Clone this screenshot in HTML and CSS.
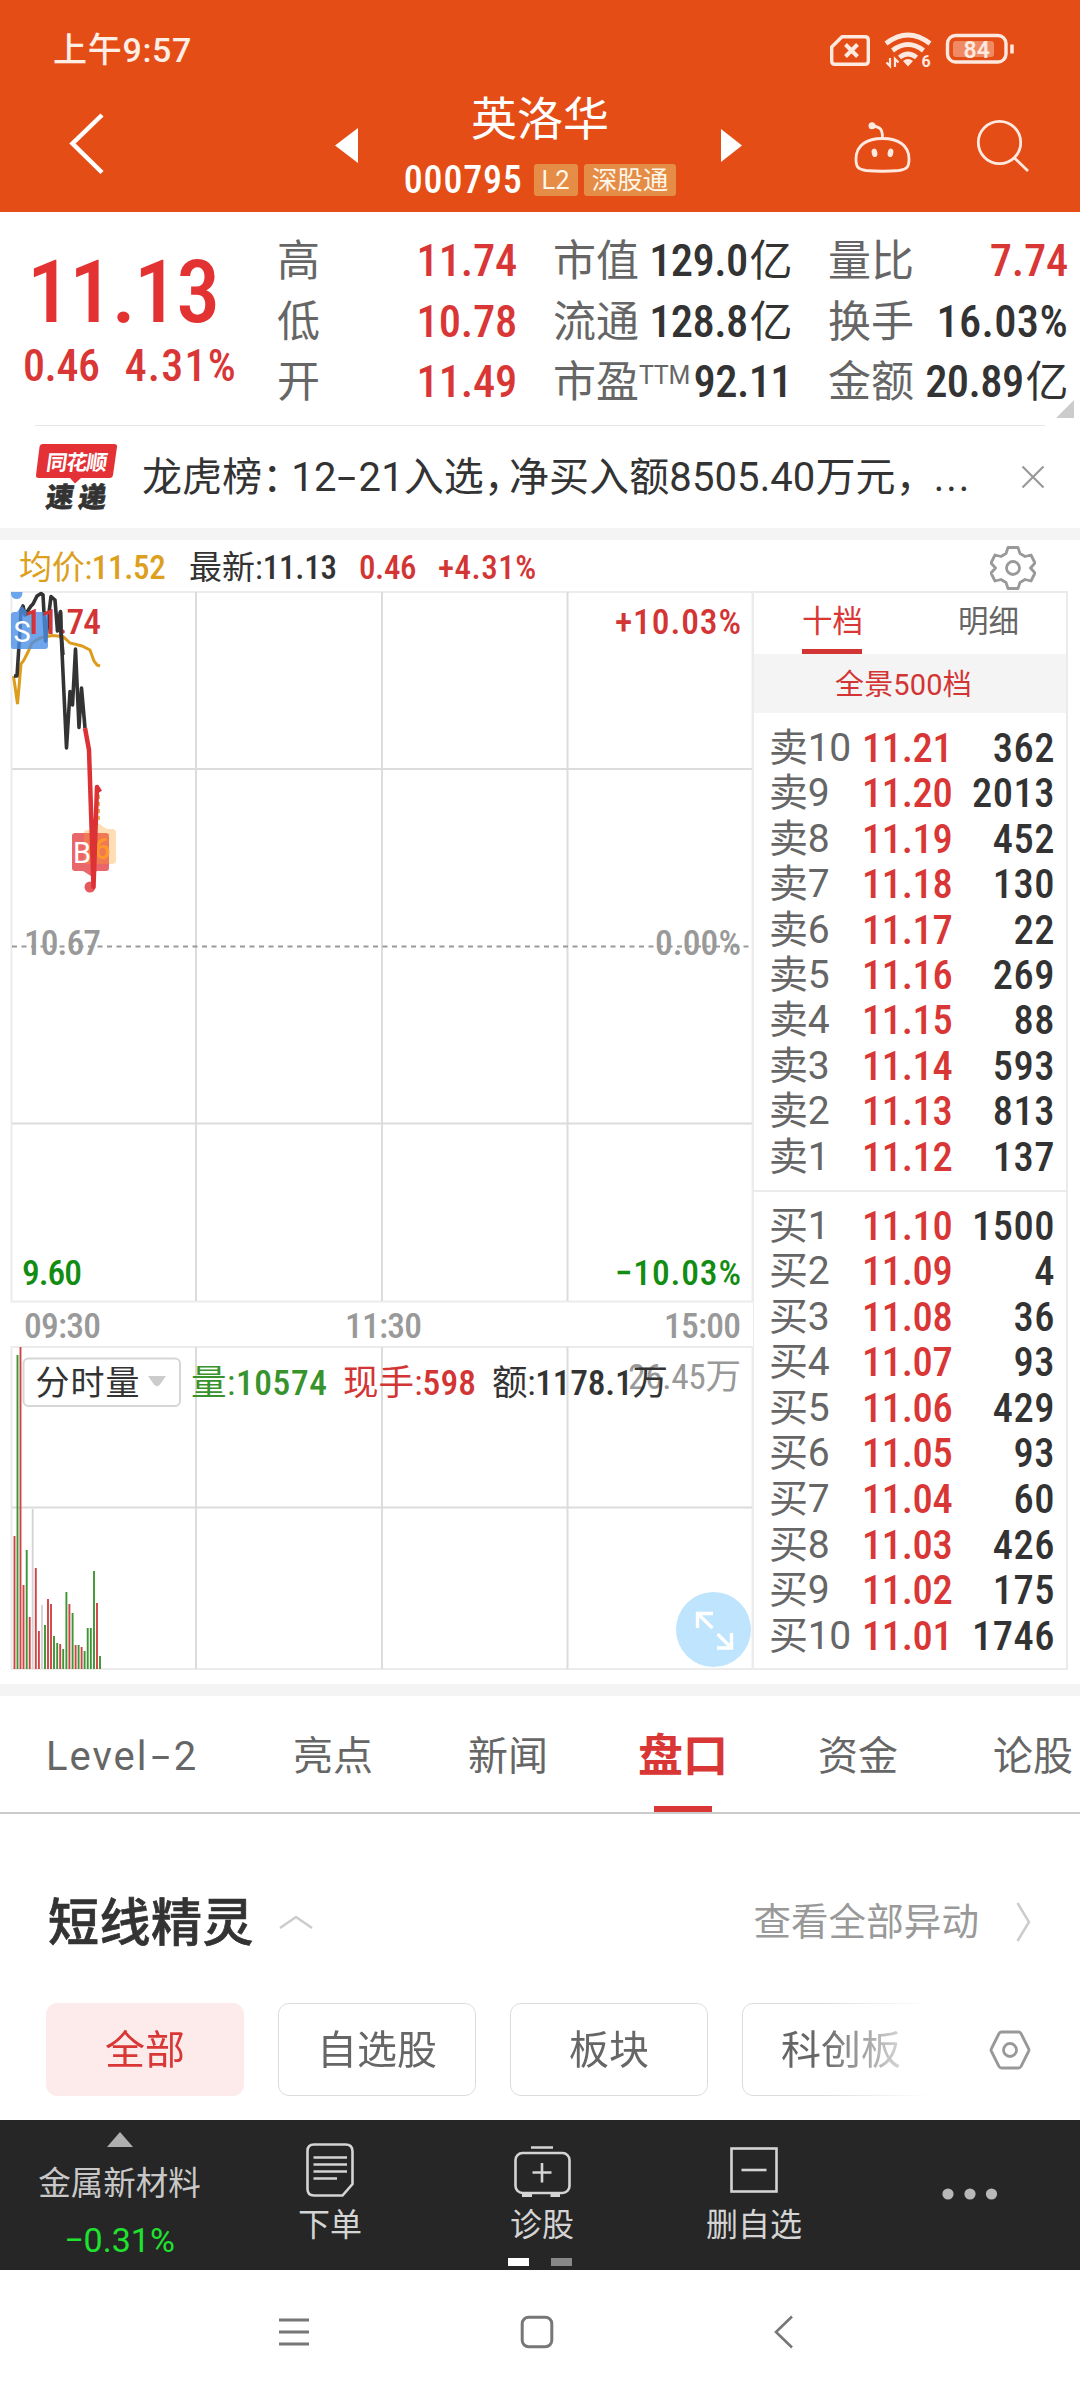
FILE: index.html
```html
<!DOCTYPE html>
<html lang="zh-CN">
<head>
<meta charset="utf-8">
<title>英洛华 000795</title>
<link rel="stylesheet" href="styles.css">
</head>
<body>
<header class="top">
  <div class="status">
    <span class="clock">上午9:57</span>
    <svg class="status-icons" width="190" height="40" viewBox="828 30 190 40" fill="none" stroke="#fde9df" stroke-width="3.4">
      <path d="M842 36.700H865Q868.300 36.700 868.300 40V61Q868.300 64.300 865 64.300H835Q831.700 64.300 831.700 61V47Z" stroke-linejoin="round"/>
      <path d="M845.500 44.500L857.500 56.500M857.500 44.500L845.500 56.500" stroke-width="4"/>
      <path d="M886 43.500Q908 26.500 930 43.500" stroke-width="4.800"/>
      <path d="M892.500 50.500Q908 38.500 923.500 50.500" stroke-width="4.800"/>
      <path d="M899.500 57.500Q908 50.500 916.500 57.500" stroke-width="4.800"/>
      <path d="M908 66.500L903 61Q908 57 913 61Z" fill="#fde9df" stroke="none"/>
      <path d="M890 58V66L886.500 62.500M895 67V59L898.500 62.500" stroke-width="2.200"/>
      <text class="wifi-gen" x="921.500" y="67">6</text>
      <rect x="947.500" y="35.500" width="58.500" height="26.500" rx="8"/>
      <rect x="953" y="41" width="41" height="16" rx="3" fill="#f08a64" stroke="none"/>
      <path d="M1012 44.500V53.500" stroke-width="3.500"/>
      <text class="battery" x="963.500" y="58">84</text>
    </svg>
  </div>
  <div class="titlebar">
    <svg class="back" width="40" height="66" viewBox="68 111 40 66"><path d="M102 115L72.500 143.500L102 172.500" fill="none" stroke="#fff" stroke-width="4.500"/></svg>
    <svg class="prev" width="24" height="35" viewBox="0 0 24 35"><path d="M23 0V35L0 17.500Z" fill="#fff"/></svg>
    <div class="stock">
      <div class="name">英洛华</div>
      <div class="code"><span class="digits">000795</span><span class="badge">L2</span><span class="badge">深股通</span></div>
    </div>
    <svg class="next" width="22" height="33" viewBox="0 0 22 33"><path d="M0 0V33L21 16.500Z" fill="#fff"/></svg>
    <svg class="robot" width="62" height="56" viewBox="852 119 62 56" fill="none" stroke="#ffe9e0" stroke-width="2.800">
      <path d="M866 170.500C857 169 856 166 856 159C856 145 867 138.500 882.500 138.500S909 145 909 159C909 166 908 169 899 170.500Q882.500 172 866 170.500Z"/>
      <path d="M882.500 138C882.500 130 881 127 873 126"/>
      <circle cx="872" cy="125.800" r="3.500" fill="#ffe9e0" stroke="none"/>
      <ellipse cx="874.500" cy="152.800" rx="2.800" ry="4.200" fill="#ffe9e0" stroke="none" transform="rotate(-12 874.500 152.800)"/>
      <ellipse cx="890.500" cy="152.800" rx="2.800" ry="4.200" fill="#ffe9e0" stroke="none" transform="rotate(12 890.500 152.800)"/>
    </svg>
    <svg class="search" width="54" height="54" viewBox="976 119 54 54" fill="none" stroke="#ffe9e0" stroke-width="2.800"><circle cx="999.500" cy="142.500" r="21.200"/><path d="M1014 157.500L1028 171"/></svg>
  </div>
</header>

<section class="quote">
  <div class="price"><div class="last">11.13</div><div class="change"><span>0.46</span><span class="ratio">4.31%</span></div></div>
  <div class="col ohl">
    <div><label>高</label><b class="up">11.74</b></div>
    <div><label>低</label><b class="up">10.78</b></div>
    <div><label>开</label><b class="up">11.49</b></div>
  </div>
  <div class="col cap">
    <div><label>市值</label><b>129.0<i>亿</i></b></div>
    <div><label>流通</label><b>128.8<i>亿</i></b></div>
    <div><label>市盈<sup>TTM</sup></label><b>92.11</b></div>
  </div>
  <div class="col vol">
    <div><label>量比</label><b class="up">7.74</b></div>
    <div><label>换手</label><b class="wide">16.03%</b></div>
    <div><label>金额</label><b>20.89<i>亿</i></b></div>
  </div>
  <svg class="corner" width="18" height="18" viewBox="0 0 18 18"><path d="M18 0V18H0Z" fill="#ccc"/></svg>
</section>

<section class="news">
  <svg class="brand" width="84" height="80" viewBox="35 436 84 80">
    <path d="M43 443H114Q117.500 443 117 446L113 474Q112.500 477 109.500 477H81L75 482.500L70 477H39Q35.500 477 36 474L39.500 446Q40 443 43 443Z" fill="#e33136"/>
    <text class="brand-a" transform="translate(45.500 468.500) skewX(-8)" textLength="61">同花顺</text>
    <text class="brand-b" transform="translate(45 506) skewX(-8)" textLength="60">速递</text>
  </svg>
  <span class="headline">龙虎榜<span class="colon">：</span>12<span class="dash">-</span>21入选<span class="comma">，</span>净买入额8505.40万元，<span class="dots3">...</span></span>
  <svg class="close" width="24" height="24" viewBox="0 0 24 24"><path d="M1.500 1.500L22.500 22.500M22.500 1.500L1.500 22.500" stroke="#999" stroke-width="2.200"/></svg>
</section>

<div class="legend">
  <span class="avg">均价:<b>11.52</b></span>
  <span class="now">最新:<b>11.13</b></span>
  <span class="diff">0.46</span>
  <span class="pct">+4.31%</span>
  <svg class="gear" width="46" height="46" viewBox="-23 -23 46 46" fill="none" stroke="#999" stroke-width="2.800" stroke-linejoin="round">
    <path d="M-5 -20.500H5L7 -14.500L12 -11.500L18 -13L22 -5L17.500 0L22 5L18 13L12 11.500L7 14.500L5 20.500H-5L-7 14.500L-12 11.500L-18 13L-22 5L-17.500 0L-22 -5L-18 -13L-12 -11.500L-7 -14.500Z"/>
    <circle r="6.500"/>
  </svg>
</div>

<main class="board">
  <svg class="chart" width="753" height="1080" viewBox="0 591 753 1080">
    <g fill="none" stroke="#ececec" stroke-width="2">
      <rect x="11.500" y="592" width="741" height="709.500"/>
      <rect x="11.500" y="1347" width="741" height="322"/>
    </g>
    <path d="M12 769H752M12 1123.500H752M196 592V1301M382 592V1301M567.500 592V1301M12 1507.500H752M196 1347V1669M382 1347V1669M567.500 1347V1669" stroke="#dcdcdc" stroke-width="2"/>
    <path d="M12 946.500H752" stroke="#999" stroke-width="1.800" stroke-dasharray="5 4.500"/>

    <g class="axis">
      <text x="24" y="955" textLength="77" fill="#999">10.67</text>
      <text x="655" y="955" textLength="86" fill="#999">0.00%</text>
      <text x="615" y="634" textLength="126" fill="#d33434">+10.03%</text>
      <text x="22" y="1285" textLength="60" fill="#128c12">9.60</text>
      <text x="615" y="1285" textLength="126" fill="#128c12">−10.03%</text>
      <text x="24" y="1338" textLength="77" fill="#999">09:30</text>
      <text x="345" y="1338" textLength="77" fill="#999">11:30</text>
      <text x="664" y="1338" textLength="77" fill="#999">15:00</text>
    </g>

    <path d="M13.500 676L17.500 704L21 664L24 660L28 652L32 643L40 638L52 635.500L63 636.500L70 643L82 646L90 650L94 661L97 665L100 666" fill="none" stroke="#dd9c1c" stroke-width="3"/>
    <path d="M14 676L17 676L20 630L21 610L23 606L25 615L31 606L33 604L37 596L41 593.500L43 595L45.500 641L51 596.500L55 600L57.500 631L60.500 611.500L61 630L66.500 748L70 691.500L72.500 705L75.500 649L79 727.500L81.500 688L85 728" fill="none" stroke="#333" stroke-width="3.600" stroke-linejoin="round"/>
    <path d="M11 592H22.500Q22.500 599 17 599T11 594Z" fill="#6ba5ec"/>
    <path d="M13 612H17L22 606L27 612H45Q48 612 48 615V646Q48 649 45 649H13Q11 649 11 646V614Z" fill="#4b8fe6" fill-opacity=".8"/>
    <g class="axis"><text x="24" y="634" textLength="77" fill="#d33434">11.74</text></g>
    <path d="M57.500 631L60.500 612L61 632L63 655" fill="none" stroke="#333" stroke-width="3.600"/>
    <text class="mark" x="13.500" y="642">S</text>
    <path d="M99 795V822" stroke="#dd9c1c" stroke-width="1.500" stroke-dasharray="4 3"/>
    <path d="M75 833H106Q109 833 109 836V868Q109 871 106 871H97L91 876L83 871H75Q72 871 72 868V836Q72 833 75 833Z" fill="#e33b40" fill-opacity=".78"/>
    <path d="M87 830H92L98 823L107 829H112Q116 829 116 833V860Q116 864 112 864H87Q84 864 84 861V833Q84 830 87 830Z" fill="#ff9f2a" fill-opacity=".35"/>
    <circle cx="90" cy="887" r="5.500" fill="#e65a5e"/>
    <text class="mark" x="73" y="863">B</text>
    <text class="mark six" x="94" y="859">6</text>
    <path d="M85 728L89 750L93.500 887L97 787L100 792" fill="none" stroke="#dd3235" stroke-width="4.500" stroke-linejoin="round"/>

    <path d="M14.500 1536V1669M20.500 1347V1669M23.500 1585V1669M29.700 1617V1669M35.800 1568V1669M38.900 1631V1669M48 1599V1669M51 1604V1669M60.200 1644V1669M69.400 1604V1669M75.600 1645V1669M81.600 1647V1669M97 1603V1669" stroke="#cf4444" stroke-width="1.900"/>
    <path d="M17.500 1355V1669M26.700 1550V1669M45 1625V1669M54 1636V1669M57.200 1643V1669M63.200 1649V1669M66.400 1592V1669M72.600 1613V1669M78.600 1645V1669M84.600 1651V1669M87.700 1628V1669M90.800 1628V1669M94 1571V1669M100 1656V1669" stroke="#409435" stroke-width="1.900"/>
    <path d="M32.700 1509V1669M42 1605V1669" stroke="#d4d4d4" stroke-width="1.900"/>

    <rect x="23.500" y="1358.500" width="156.500" height="47.500" rx="5" fill="#fff" stroke="#d6d6d6" stroke-width="2"/>
    <text class="cn" x="35.500" y="1395" textLength="104" fill="#333">分时量</text>
    <path d="M148 1376H166L160 1384.500Q157 1388 154 1384.500Z" fill="#ccc"/>
    <g class="axis flow">
      <text x="628" y="1389" textLength="113" fill="#999">26.45万</text>
      <text x="191" y="1395" textLength="136" fill="#38932c">量:<tspan>10574</tspan></text>
      <text x="343" y="1395" textLength="133" fill="#d33434">现手:<tspan>598</tspan></text>
      <text x="492" y="1395" textLength="176" fill="#333">额:<tspan>1178.1</tspan>万</text>
    </g>
    <circle cx="713.500" cy="1629.500" r="37.500" fill="#bfe4fd"/>
    <path d="M697.500 1628V1613.500H713M698 1614L712.500 1628M717.500 1634L731 1647.500M731.500 1633V1648H717" fill="none" stroke="#fff" stroke-width="3.400"/>
  </svg>

  <aside class="book">
    <div class="book-tabs"><span class="on">十档</span><span>明细</span></div>
    <div class="depth">全景500档</div>
    <ul class="asks">
      <li><span>卖10</span><b>11.21</b><em>362</em></li>
      <li><span>卖9</span><b>11.20</b><em>2013</em></li>
      <li><span>卖8</span><b>11.19</b><em>452</em></li>
      <li><span>卖7</span><b>11.18</b><em>130</em></li>
      <li><span>卖6</span><b>11.17</b><em>22</em></li>
      <li><span>卖5</span><b>11.16</b><em>269</em></li>
      <li><span>卖4</span><b>11.15</b><em>88</em></li>
      <li><span>卖3</span><b>11.14</b><em>593</em></li>
      <li><span>卖2</span><b>11.13</b><em>813</em></li>
      <li><span>卖1</span><b>11.12</b><em>137</em></li>
    </ul>
    <ul class="bids">
      <li><span>买1</span><b>11.10</b><em>1500</em></li>
      <li><span>买2</span><b>11.09</b><em>4</em></li>
      <li><span>买3</span><b>11.08</b><em>36</em></li>
      <li><span>买4</span><b>11.07</b><em>93</em></li>
      <li><span>买5</span><b>11.06</b><em>429</em></li>
      <li><span>买6</span><b>11.05</b><em>93</em></li>
      <li><span>买7</span><b>11.04</b><em>60</em></li>
      <li><span>买8</span><b>11.03</b><em>426</em></li>
      <li><span>买9</span><b>11.02</b><em>175</em></li>
      <li><span>买10</span><b>11.01</b><em>1746</em></li>
    </ul>
  </aside>
</main>

<nav class="tabs"><span class="lv2">Level<span class="dash">-</span>2</span><span>亮点</span><span>新闻</span><span class="active">盘口</span><span>资金</span><span>论股</span></nav>

<section class="sprite">
  <div class="sprite-head">
    <h2>短线精灵</h2>
    <svg class="fold" width="34" height="15" viewBox="0 0 34 15"><path d="M1 13L17 2L33 13" fill="none" stroke="#ccc" stroke-width="2.500"/></svg>
    <span class="more">查看全部异动</span>
    <svg width="15" height="40" viewBox="0 0 15 40"><path d="M1.500 1L13 20L1.500 39" fill="none" stroke="#ccc" stroke-width="2.500"/></svg>
  </div>
  <div class="chips">
    <div class="chip-row"><span class="chip on">全部</span><span class="chip">自选股</span><span class="chip">板块</span><span class="chip">科创板</span></div>
    <svg width="42" height="40" viewBox="0 0 42 40" fill="none" stroke="#999" stroke-width="2.800" stroke-linejoin="round"><path d="M12.500 2H29.500Q31 2 32 3.500L39.500 18.500Q40.500 20 39.500 21.500L32 36.500Q31 38 29.500 38H12.500Q11 38 10 36.500L2.500 21.500Q1.500 20 2.500 18.500L10 3.500Q11 2 12.500 2Z"/><circle cx="21" cy="20" r="6.500"/></svg>
  </div>
</section>

<footer class="actions">
  <div class="sector">
    <svg width="26" height="15" viewBox="0 0 26 15"><path d="M13 0L26 15H0Z" fill="#b0b0b0"/></svg>
    <span>金属新材料</span><span class="down">−0.31%</span>
  </div>
  <div class="act">
    <svg width="60" height="58" viewBox="300 2141 60 58" fill="none" stroke="#d4d4d4" stroke-width="2.600"><path d="M314 2144.500H345.500Q352.500 2144.500 352.500 2151.500V2184L342.500 2195.500H314Q307.500 2195.500 307.500 2189V2151Q307.500 2144.500 314 2144.500Z"/><path d="M313.500 2157.500H347M313.500 2164.500H347M313.500 2171.500H347M313.500 2178.500H337"/></svg>
    <span>下单</span>
  </div>
  <div class="act">
    <svg width="60" height="58" viewBox="512 2141 60 58" fill="none" stroke="#d4d4d4" stroke-width="2.600"><rect x="515.500" y="2153" width="54" height="40" rx="7"/><path d="M531 2147.500H553M542 2163V2182.500M532.500 2172.500H551.500"/><path d="M522 2195H532M550.500 2195H560" stroke-width="4"/></svg>
    <span>诊股</span>
    <div class="pager"><i></i><i></i></div>
  </div>
  <div class="act">
    <svg width="60" height="58" viewBox="724 2141 60 58" fill="none" stroke="#d4d4d4" stroke-width="2.600"><rect x="731.500" y="2148.500" width="45" height="43"/><path d="M741.500 2170H766.500"/></svg>
    <span>删自选</span>
  </div>
  <div class="act dots"><svg width="56" height="12" viewBox="0 0 56 12" fill="#b8b8b8"><circle cx="6" cy="6" r="5.600"/><circle cx="28" cy="6" r="5.600"/><circle cx="49.500" cy="6" r="5.600"/></svg></div>
</footer>

<div class="sysnav">
  <svg width="30" height="28" viewBox="0 0 30 28"><path d="M0 2H30M0 14H30M0 26H30" stroke="#777" stroke-width="3"/></svg>
  <svg width="34" height="34" viewBox="0 0 34 34"><rect x="2.200" y="2.200" width="29.600" height="29.600" rx="6.500" fill="none" stroke="#777" stroke-width="3"/></svg>
  <svg width="20" height="34" viewBox="0 0 20 34"><path d="M18 1.500L2 17L18 32.500" fill="none" stroke="#777" stroke-width="2.600"/></svg>
</div>
</body>
</html>
```
FILE: styles.css
```css
* { box-sizing: border-box; }
body {
  margin: 0;
  width: 1080px;
  height: 2400px;
  overflow: hidden;
  background: #fff;
  color: #333;
  font-family: Roboto, "Noto Sans CJK SC", sans-serif;
}
svg { display: block; flex: none; }
i, em { font-style: normal; }
.digits, .last, .change, .col b, .legend, .axis, .book b, .book em {
  font-family: "Roboto Condensed", "Noto Sans CJK SC", sans-serif;
}

/* status bar and title */
.top { height: 212px; background: #e54d16; color: #fff; }
.status { display: flex; justify-content: space-between; height: 80px; padding: 30px 62px 0 53px; }
.clock { font-size: 34px; line-height: 41px; color: #fdeee6; font-weight: 500; letter-spacing: .7px; }
.wifi-gen, .battery { fill: #fde9df; stroke: none; font-weight: 700; }
.wifi-gen { font-size: 16px; }
.battery { font-size: 23px; font-weight: 600; }
.titlebar { display: flex; height: 132px; }
.back { margin: 31px 0 0 68px; }
.prev { margin: 48px 0 0 227px; }
.stock { width: 362px; text-align: center; white-space: nowrap; }
.name { margin-top: 12px; font-size: 46px; line-height: 55px; }
.code { display: flex; justify-content: center; align-items: center; gap: 6px; margin-top: 13px; }
.code .digits { font-size: 38px; line-height: 38px; font-weight: 500; letter-spacing: .8px; margin-right: 5px; padding-top: 1px; }
.badge { height: 32px; padding: 0 8px; border-radius: 3px; background: #e58c46; font-size: 25.5px; line-height: 32px; color: #fff6ea; }
.next { margin: 49px 0 0 0; }
.robot { margin: 39px 0 0 109px; }
.search { margin: 39px 0 0 62px; }

/* quote */
.quote { position: relative; display: flex; height: 213px; }
.price { width: 277px; color: #e33232; }
.last { margin: 36px 0 0 27px; font-size: 88px; line-height: 88px; font-weight: 500; letter-spacing: -1.800px; }
.change { display: flex; gap: 25px; margin: 7px 0 0 23px; font-size: 44px; line-height: 46px; font-weight: 500; color: #d93636; letter-spacing: -.4px; }
.ratio { letter-spacing: 1.2px; }
.col { padding-top: 19px; }
.col > div { display: flex; justify-content: space-between; height: 60.5px; line-height: 60px; white-space: nowrap; }
.col label { font-size: 43px; color: #666; }
.col b { font-size: 44.5px; font-weight: 500; letter-spacing: -.6px; }
.col .wide { letter-spacing: .3px; }
.col .up { color: #d93636; letter-spacing: -.2px; }
.col i { font-weight: 400; font-size: 43px; margin-left: 2px; }
.col sup { font-size: 25px; line-height: 0; vertical-align: 13px; letter-spacing: -.3px; }
.ohl { width: 240px; }
.cap { width: 239px; margin-left: 36px; }
.vol { width: 240px; margin-left: 36px; }
.corner { position: absolute; left: 1056px; top: 188px; }

/* news strip */
.news { display: flex; align-items: center; height: 103px; margin: 0 35px; border-top: 1px solid #e6e6e6; }
.headline { width: 880px; margin-left: 23px; font-size: 40px; line-height: 52px; padding-top: 1px; white-space: nowrap; letter-spacing: .1px; }
.colon { letter-spacing: -11px; }
.comma { letter-spacing: -15px; }
.dash { display: inline-block; letter-spacing: 0; transform: scaleX(1.7); }
.headline .dash { margin: 0 6px 0 5px; }
.dots3 { letter-spacing: 2px; margin-left: -2px; }
.close { margin-left: auto; }
.brand-a { fill: #fff; font: 700 21px "Noto Sans CJK SC", sans-serif; }
.brand-b { fill: #333; stroke: #333; stroke-width: .6px; font: 900 27.5px "Noto Sans CJK SC", sans-serif; }

/* chart legend */
.legend { display: flex; height: 63px; padding-left: 19px; border-top: 12px solid #f4f4f4; font-size: 33px; line-height: 56px; white-space: nowrap; }
.legend span { flex: none; font-weight: 500; }
.legend b { font-weight: 500; }
.legend .avg { width: 170px; color: #dc9f1e; font-weight: 400; letter-spacing: -.3px; }
.legend .now { width: 170px; font-weight: 400; }
.legend .now b { letter-spacing: -.2px; }
.legend .diff { width: 79px; color: #d33434; letter-spacing: -.4px; }
.legend .pct { color: #d33434; letter-spacing: .5px; }
.gear { margin: 5px 44px 0 auto; }

/* chart and order book */
.board { display: flex; height: 1093px; }
.axis { font-size: 35.5px; font-weight: 500; }
.axis.flow { font-weight: 400; }
.axis.flow tspan { font-weight: 500; }
.cn { font-size: 34px; }
.mark { font-size: 29px; fill: #fff; font-family: Roboto, sans-serif; }
.six { fill: #ff982b; font-weight: 500; }
.book { width: 315px; height: 1079px; border: 1px solid #ebebeb; border-width: 2px 2px 2px 1px; }
.book-tabs { display: flex; justify-content: space-around; height: 61px; color: #666; font-size: 30.5px; line-height: 57px; }
.book-tabs span { width: 60px; margin: 0 48px; white-space: nowrap; }
.book-tabs .on { color: #d93636; border-bottom: 5px solid #d33434; }
.depth { height: 59px; background: #f4f4f4; color: #d33434; text-align: center; font-size: 29px; line-height: 62px; padding-right: 13px; letter-spacing: .2px; }
.book ul { list-style: none; margin: 0; padding: 12px 11px 0 15px; }
.book .asks { height: 479px; border-bottom: 2px solid #ebebeb; }
.book .bids { padding-top: 10.5px; }
.book li { display: flex; height: 45.4px; line-height: 46px; font-size: 40px; white-space: nowrap; }
.book .bids li { height: 45.6px; }
.book li span { width: 93px; color: #666; font-size: 39px; letter-spacing: -.3px; }
.book b, .book em { font-weight: 500; font-size: 40.5px; letter-spacing: .5px; }
.book b { color: #d93636; letter-spacing: -.4px; }
.book em { margin-left: auto; }

/* section tabs */
.tabs { display: flex; height: 130px; border-top: 12px solid #f4f4f4; border-bottom: 2px solid #cbcbcb; padding-left: 46px; font-size: 40px; line-height: 121px; color: #666; white-space: nowrap; overflow: hidden; }
.tabs > span { flex: none; width: 80px; margin-right: 95px; }
.tabs .lv2 { width: 152px; letter-spacing: 2px; }
.tabs .dash { margin: 0 8px 0 6px; }
.tabs .active { width: 90px; margin: 0 90px 0 -5px; color: #d93636; font-size: 45px; font-weight: 700; background: linear-gradient(#d93636, #d93636) 50% 100% / 58px 6px no-repeat; }

/* short-term radar */
.sprite { height: 306px; padding: 76px 49px 0 47px; }
.sprite-head { display: flex; align-items: center; height: 64px; }
h2 { margin: 3px 0 0 1px; font-size: 51px; line-height: 64px; font-weight: 500; letter-spacing: .5px; -webkit-text-stroke: .7px #333; }
.fold { margin-left: 25px; }
.more { margin: -7px 37px 0 auto; font-size: 37.5px; color: #999; letter-spacing: .1px; }
.chips { display: flex; justify-content: space-between; align-items: center; margin: 49px 0 0 -1px; }
.chip-row { display: flex; gap: 34px; width: 884px; overflow: hidden; -webkit-mask-image: linear-gradient(90deg, #000 775px, transparent 884px); mask-image: linear-gradient(90deg, #000 775px, transparent 884px); }
.chip { flex: none; width: 198px; height: 93px; border: 1.500px solid #dcdcdc; border-radius: 11px; font-size: 40px; line-height: 94px; text-align: center; color: #666; }
.chip.on { background: #fdebeb; border-color: #fdebeb; color: #d93636; }

/* action bar */
.actions { display: flex; height: 150px; background: #262626; color: #c8c8c8; font-size: 32px; white-space: nowrap; }
.sector { display: flex; flex-direction: column; align-items: center; flex: none; width: 239px; padding-top: 12px; }
.sector span { font-size: 32.5px; line-height: 40px; margin-top: 17px; }
.sector .down { margin-top: 16px; color: #1fe22f; font-size: 34px; }
.act { display: flex; flex-direction: column; align-items: center; flex: none; width: 182px; padding-top: 21px; color: #d4d4d4; }
.act:nth-child(3) { width: 242px; }
.act span { margin-top: 6px; line-height: 40px; }
.pager { display: flex; gap: 22px; margin: 13px 4px 0 0; }
.pager i { width: 21px; height: 8px; background: #fff; }
.pager i + i { background: #888; }
.act.dots { width: 235px; padding: 68px 0 0 14px; }

/* system navigation */
.sysnav { display: flex; align-items: center; height: 124px; padding-left: 279px; }
.sysnav svg + svg { margin-left: 211px; }
.sysnav svg + svg + svg { margin-left: 220px; }
```
